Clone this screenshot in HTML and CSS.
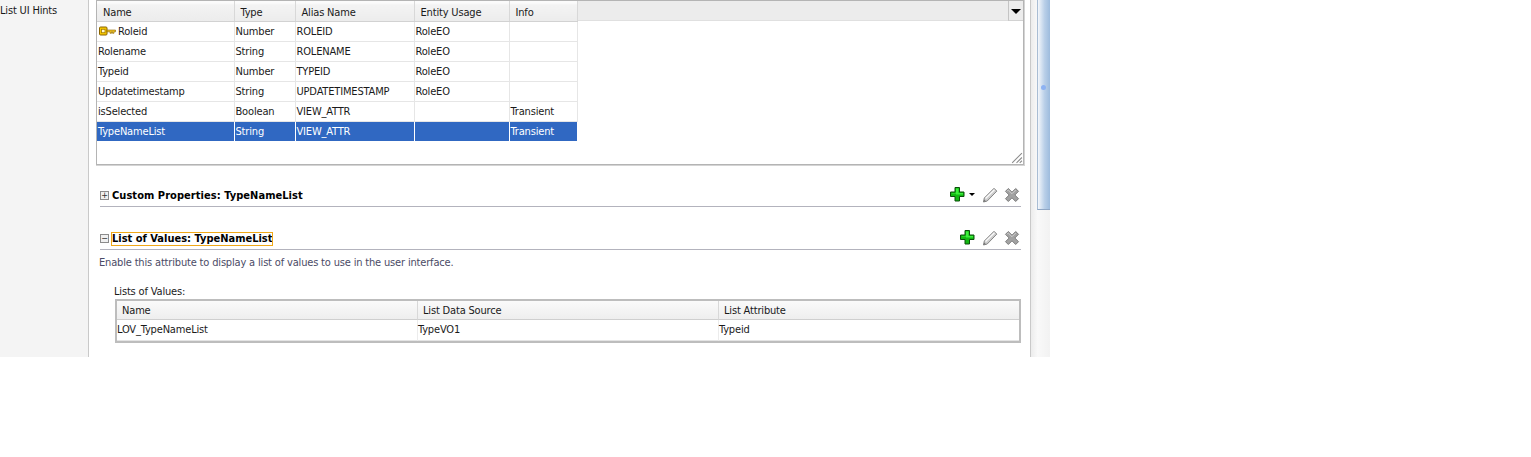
FILE: index.html
```html
<!DOCTYPE html>
<html lang="en">
<head>
<meta charset="utf-8">
<title>List of Values</title>
<link rel="stylesheet" href="styles.css">
</head>
<body>
<svg class="defs" width="0" height="0" aria-hidden="true">
  <symbol id="plus" viewBox="0 0 16 16">
    <path d="M6 1.500h4.500V6H15v4.500h-4.500V15H6v-4.500H1.500V6H6z" fill="#12b812" stroke="#0a4f0a" stroke-width="1"/>
    <path d="M7 2.500h2.500v4.500H14v1.500H7v-1H2.800V7H7z" fill="#3cf03c"/>
  </symbol>
  <symbol id="pencil" viewBox="0 0 16 16">
    <path d="M1.500 15l.8-4L12 1.300l2.800 2.800L5.200 14z" fill="#cdcdcd" stroke="#858585" stroke-width="1"/>
    <path d="M3.500 11.500L12.500 2.800" stroke="#fafafa" stroke-width="1.300"/>
    <path d="M1.500 15l.8-2.500 1.700 1.700z" fill="#777"/>
  </symbol>
  <symbol id="cross" viewBox="0 0 16 16">
    <path d="M1.500 4.300l2.800-2.800L8 5.200l3.700-3.700 2.800 2.800L10.800 8l3.700 3.700-2.800 2.800L8 10.800l-3.700 3.700-2.800-2.800L5.200 8z" fill="#a2a2a2" stroke="#7c7c7c" stroke-width="1"/>
    <path d="M3 4.300l1.300-1.300L8 6.700l3.700-3.700" fill="none" stroke="#d0d0d0" stroke-width="1"/>
  </symbol>
</svg>
<div class="app">
  <aside class="side"><div class="side-item">List UI Hints</div></aside>
  <main class="main">
    <div class="grid-box">
      <div class="grid-inner">
        <div class="head-row">
          <table class="attrs">
            <colgroup><col class="c1"><col class="c2"><col class="c3"><col class="c4"><col class="c5"></colgroup>
            <thead><tr><th>Name</th><th>Type</th><th>Alias Name</th><th>Entity Usage</th><th>Info</th></tr></thead>
            <tbody>
              <tr><td><span class="key-cell"><svg class="key" viewBox="0 0 17 10"><rect x=".5" y="1" width="7.500" height="8" rx="1" fill="#f7c800" stroke="#8a6400"/><rect x="2.500" y="3.300" width="3.500" height="3.400" fill="#fff8d0" stroke="#a57c00" stroke-width=".8"/><path d="M8 4h8.500v1.800h-1.500v1.500h-1.500V5.800h-1v1.500h-1.500V5.800H8z" fill="#f0c020" stroke="#8a6400" stroke-width=".6"/></svg>Roleid</span></td><td>Number</td><td>ROLEID</td><td>RoleEO</td><td></td></tr>
              <tr><td>Rolename</td><td>String</td><td>ROLENAME</td><td>RoleEO</td><td></td></tr>
              <tr><td>Typeid</td><td>Number</td><td>TYPEID</td><td>RoleEO</td><td></td></tr>
              <tr><td>Updatetimestamp</td><td>String</td><td>UPDATETIMESTAMP</td><td>RoleEO</td><td></td></tr>
              <tr><td>isSelected</td><td>Boolean</td><td>VIEW_ATTR</td><td></td><td>Transient</td></tr>
              <tr class="sel"><td>TypeNameList</td><td>String</td><td>VIEW_ATTR</td><td></td><td>Transient</td></tr>
            </tbody>
          </table>
          <div class="head-fill"></div>
          <div class="head-menu"><span class="caret"></span></div>
        </div>
        <svg class="grip" viewBox="0 0 12 12"><path d="M11 2L2 11M11 6L6 11M11 9L9 11" stroke="#8c8c8c" stroke-width="1"/></svg>
      </div>
    </div>

    <section class="sec sec-custom">
      <div class="sec-head">
        <span class="tog">+</span>
        <span class="sec-title">Custom Properties: TypeNameList</span>
        <span class="tools">
          <svg class="ico plus"><use href="#plus"/></svg><span class="mini-caret"></span>
          <svg class="ico"><use href="#pencil"/></svg>
          <svg class="ico"><use href="#cross"/></svg>
        </span>
      </div>
    </section>

    <section class="sec sec-lov">
      <div class="sec-head">
        <span class="tog">−</span>
        <span class="sec-title focus">List of Values: TypeNameList</span>
        <span class="tools">
          <svg class="ico plus plus-solo"><use href="#plus"/></svg>
          <svg class="ico"><use href="#pencil"/></svg>
          <svg class="ico"><use href="#cross"/></svg>
        </span>
      </div>
      <p class="desc">Enable this attribute to display a list of values to use in the user interface.</p>
      <div class="lov-label">Lists of Values:</div>
      <table class="lov">
        <colgroup><col class="l1"><col class="l2"><col></colgroup>
        <thead><tr><th>Name</th><th>List Data Source</th><th>List Attribute</th></tr></thead>
        <tbody><tr><td>LOV_TypeNameList</td><td>TypeVO1</td><td>Typeid</td></tr></tbody>
      </table>
    </section>
  </main>
  <div class="scroll">
    <div class="thumb"><span class="dot"></span></div>
  </div>
</div>
</body>
</html>
```

FILE: styles.css
```css
* { box-sizing: border-box; }
html, body { margin: 0; padding: 0; background: #fff; }
body { font-family: "DejaVu Sans Condensed", "DejaVu Sans", sans-serif; font-stretch: condensed; font-size: 11px; letter-spacing: -.17px; color: #1a1a1a; }
.defs { display: block; height: 0; }

.app { display: flex; width: 1050px; height: 357px; overflow: hidden; }
.side { width: 89px; flex: none; background: #f4f4f4; border-right: 1px solid #c9c9c9; }
.side-item { line-height: 21px; height: 21px; }

.main { width: 942px; flex: none; background: #fff; padding-left: 7px; border-right: 1px solid #c9c9c9; }

.grid-box { width: 929px; height: 166px; border-right: 1px solid #d4d4d4; border-bottom: 1px solid #d4d4d4; }
.grid-inner { position: relative; height: 165px; border: 1px solid #b4b4b4; }
.head-row { display: flex; position: relative; }
.attrs { border-collapse: collapse; table-layout: fixed; width: 480px; flex: none; }
.c1 { width: 137px; } .c2 { width: 61px; } .c3 { width: 119px; } .c4 { width: 95px; } .c5 { width: 68px; }
.attrs th { height: 20px; padding: 4px 0 0 6px; font-weight: normal; text-align: left; background: linear-gradient(#fbfbfb 10%, #f3f3f3 20%, #ececec); border-right: 1px solid #d8d8d8; border-bottom: 1px solid #d2d2d2; }
.attrs td { height: 20px; padding: 0 0 0 1px; border-right: 1px solid #e6e6e6; border-bottom: 1px solid #e6e6e6; white-space: nowrap; }
.attrs .sel td { background: #3068c2; color: #fff; border-right-color: #fff; border-bottom-color: #fff; }
.key-cell { display: flex; align-items: center; }
.key { width: 17px; height: 10px; margin: 0 2px 0 1px; flex: none; }
.head-fill { flex: 1; height: 20px; background: #ececec; border-bottom: 1px solid #e0e0e0; }
.head-menu { width: 15px; height: 20px; padding-top: 2px; background: #ececec; border-left: 1px solid #c4c4c4; border-bottom: 1px solid #d2d2d2; display: flex; align-items: center; justify-content: center; flex: none; }
.caret { width: 0; height: 0; border-left: 5px solid transparent; border-right: 5px solid transparent; border-top: 5px solid #000; }
.grip { position: absolute; right: 0; bottom: 0; width: 13px; height: 13px; }

.sec { width: 921px; margin-left: 4px; }
.sec-custom { margin-top: 19px; }
.sec-lov { margin-top: 21px; }
.sec-head { display: flex; align-items: center; height: 22px; border-bottom: 1px solid #b3b3bd; }
.tog { width: 9px; height: 9px; border: 1px solid #8c8c8c; background: #f0f0f0; font-size: 9px; line-height: 7px; text-align: center; color: #333; flex: none; margin-right: 3px; overflow: hidden; }
.sec-title { font-weight: bold; font-size: 11px; letter-spacing: .05px; color: #000; line-height: 12px; }
.focus { letter-spacing: 0; outline: 1px solid #f0a818; }
.tools { margin-left: auto; margin-bottom: 2px; display: flex; align-items: center; gap: 6px; padding-right: 1px; }
.ico { width: 16px; height: 16px; flex: none; }
.plus { margin-bottom: 2px; }
.plus-solo { margin-right: 1px; }
.mini-caret { width: 0; height: 0; border-left: 3px solid transparent; border-right: 3px solid transparent; border-top: 3px solid #000; margin: 0 1px 0 -2px; }

.desc { margin: 6px 0 0 -1px; line-height: 13px; color: #4b4b66; }
.lov-label { margin: 16px 0 0 14px; line-height: 13px; }
.lov { margin: 1px 0 0 15px; width: 906px; border: 2px solid #bdbdbd; border-collapse: separate; border-spacing: 0; table-layout: fixed; }
.l1 { width: 301px; } .l2 { width: 301px; }
.lov th { height: 19px; padding: 0 0 0 5px; font-weight: normal; text-align: left; background: linear-gradient(#fafafa, #eeeeee); border-right: 1px solid #d8d8d8; border-bottom: 1px solid #cfcfcf; }
.lov th:last-child { border-right: 0; }
.lov td { height: 21px; padding: 0 0 2px 0; border-right: 1px solid #ececec; border-bottom: 1px solid #e4e4e4; }
.lov td:last-child { border-right: 0; }

.scroll { width: 19px; flex: none; background: linear-gradient(90deg, #ececec, #f9f9f9 35%, #f2f2f2); padding-left: 6px; }
.thumb { position: relative; height: 210px; width: 13px; background: linear-gradient(90deg, #f4f7fb, #b9cfe8 55%, #9dbbdd); border-left: 1px solid #a9bdd4; border-bottom: 1px solid #8fa6c4; }
.dot { position: absolute; left: 3px; top: 85px; width: 5px; height: 5px; border-radius: 50%; background: #8db2f2; }
```
